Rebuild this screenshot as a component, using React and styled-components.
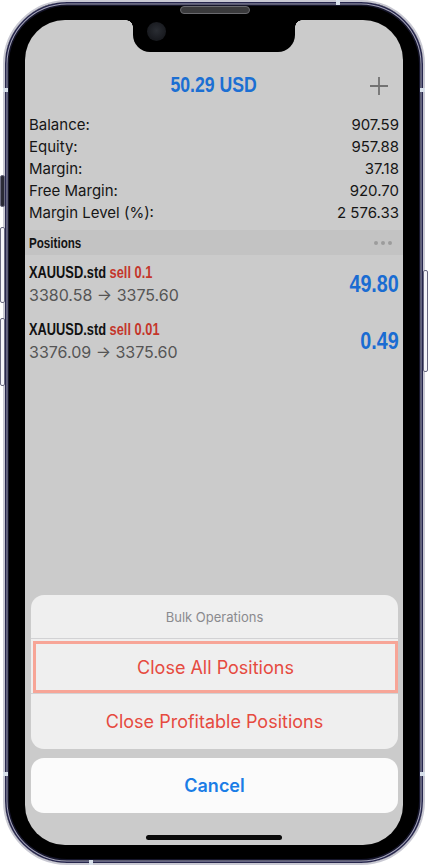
import React from "react";
import styled, { createGlobalStyle } from "styled-components";

const Global = createGlobalStyle`
  html, body { margin: 0; padding: 0; background: #ffffff; }
  body { font-family: Inter, "Noto Sans", sans-serif; -webkit-font-smoothing: antialiased; }
  #root { width: 428px; height: 865px; }
`;

const Phone = styled.div`
  position: relative;
  box-sizing: border-box;
  width: 422px;
  height: 865px;
  margin: 0 auto;
  border-radius: 64px;
  background: #000;
  border: 2px solid #c9c9d3;
  box-shadow: inset 0 0 0 1.5px #26264c, inset 0 0 0 2.5px #a4a4b8, inset 0 0 0 4px #15152b;
  padding: 18px 20px;
  display: flex;
`;

const SideButton = styled.span`
  position: absolute;
  ${(p) => (p.$side === "left" ? "left: -5px;" : "right: -5px;")}
  top: ${(p) => p.$top}px;
  height: ${(p) => p.$h}px;
  width: 3px;
  border: 1px solid #6a6a80;
  border-radius: 2px;
  background: ${(p) => (p.$dark ? "#2a2a36" : "#f4f4f8")};
`;

const Band = styled.span`
  position: absolute;
  background: #d8e0ea;
  ${(p) => p.$css}
`;

const Speaker = styled.span`
  position: absolute;
  left: 175px;
  top: 4px;
  width: 68px;
  height: 6px;
  border-radius: 4px;
  background: #3a3a3c;
  border: 1px solid #6a6a6e;
  z-index: 3;
`;

const Screen = styled.div`
  position: relative;
  flex: 1;
  border-radius: 40px;
  background: #cbcbcb;
  overflow: hidden;
  display: flex;
  flex-direction: column;
`;

const Notch = styled.div`
  position: absolute;
  top: 0;
  left: 108px;
  width: 162px;
  height: 32px;
  background: #000;
  border-radius: 0 0 17px 17px;
  &::before, &::after {
    content: "";
    position: absolute;
    top: 0;
    width: 7px;
    height: 7px;
  }
  &::before {
    left: -7px;
    background: radial-gradient(circle at 0 100%, transparent 6.5px, #000 7px);
  }
  &::after {
    right: -7px;
    background: radial-gradient(circle at 100% 100%, transparent 6.5px, #000 7px);
  }
`;

const Camera = styled.span`
  position: absolute;
  left: 14px;
  top: 2px;
  width: 19px;
  height: 19px;
  border-radius: 50%;
  background: radial-gradient(circle at 50% 45%, #2a2d33 0, #1a1c21 60%, #121317 100%);
`;

/* Narrow bold text (condensed face emulated by horizontal scaling) */
const Narrow = styled.span`
  display: inline-block;
  white-space: nowrap;
  font-family: "Liberation Sans", Arial, sans-serif;
  font-weight: 700;
  font-size: ${(p) => p.$size}px;
  color: ${(p) => p.$color || "#111"};
  transform: scaleX(${(p) => p.$scale || 0.82});
  transform-origin: ${(p) => p.$origin || "left"} center;
`;

const Red = styled.span`
  color: #c4362b;
`;

const Header = styled.div`
  display: grid;
  grid-template-columns: 1fr auto 1fr;
  align-items: center;
  padding: 52px 15px 0;
  height: 26px;
`;

const Title = styled.div`
  grid-column: 2;
  line-height: 26px;
`;

const PlusBtn = styled.div`
  grid-column: 3;
  justify-self: end;
  display: flex;
  width: 18px;
  height: 18px;
`;

const Summary = styled.div`
  padding: 15px 4px 0;
  margin-bottom: 7px;
`;

const Row = styled.div`
  display: flex;
  justify-content: space-between;
  align-items: center;
  height: 22px;
  font-size: 15px;
  color: #161616;
`;

const SectionBar = styled.div`
  display: flex;
  justify-content: space-between;
  align-items: center;
  height: 25px;
  padding: 0 11px 0 4px;
  background: #c3c3c3;
`;

const Dots = styled.div`
  display: flex;
  gap: 3px;
  & > span {
    width: 4px;
    height: 4px;
    border-radius: 50%;
    background: #9c9c9c;
  }
`;

const Position = styled.div`
  display: flex;
  justify-content: space-between;
  align-items: center;
  padding: 6px 4px 5px;
`;

const PosInfo = styled.div`
  display: flex;
  flex-direction: column;
`;

const PosLine = styled.div`
  height: 22px;
  line-height: 22px;
`;

const Prices = styled.div`
  font-size: 16px;
  line-height: 24px;
  color: #555555;
`;

const Sheet = styled.div`
  margin-top: auto;
  padding: 0 5px 0 6px;
  display: flex;
  flex-direction: column;
  gap: 9px;
`;

const Card = styled.div`
  border-radius: 13px;
  background: ${(p) => (p.$white ? "#fbfbfb" : "#efefef")};
  overflow: hidden;
  display: flex;
  flex-direction: column;
`;

const SheetTitle = styled.div`
  height: 43px;
  display: flex;
  align-items: center;
  justify-content: center;
  font-size: 13px;
  color: #8a8a8e;
  border-bottom: 1px solid #d2d2d4;
`;

const Action = styled.div`
  box-sizing: border-box;
  display: flex;
  align-items: center;
  justify-content: center;
  height: ${(p) => p.$h || 55}px;
  font-size: 18px;
  font-weight: ${(p) => (p.$bold ? 600 : 400)};
  color: ${(p) => (p.$blue ? "#1a7de6" : "#e64a40")};
  ${(p) => (p.$divider ? "border-top: 1px solid #d2d2d4;" : "")}
  ${(p) =>
    p.$highlight
      ? "border: 3px solid #f7a597; margin: 2px 0 0 2px;"
      : ""}
`;

const HomeArea = styled.div`
  height: 32px;
  display: flex;
  justify-content: center;
  padding-top: 22px;
  box-sizing: border-box;
`;

const HomeBar = styled.span`
  width: 136px;
  height: 5px;
  border-radius: 3px;
  background: #0a0a0a;
`;

const rows = [
  ["Balance:", "907.59"],
  ["Equity:", "957.88"],
  ["Margin:", "37.18"],
  ["Free Margin:", "920.70"],
  ["Margin Level (%):", "2 576.33"],
];

const positions = [
  { sym: "XAUUSD.std", side: "sell 0.1", from: "3380.58", to: "3375.60", profit: "49.80" },
  { sym: "XAUUSD.std", side: "sell 0.01", from: "3376.09", to: "3375.60", profit: "0.49" },
];

export default function App() {
  return (
    <>
      <Global />
      <Phone>
        <SideButton $side="left" $top={173} $h={30} $dark />
        <SideButton $side="left" $top={225} $h={74} />
        <SideButton $side="left" $top={316} $h={66} />
        <SideButton $side="right" $top={268} $h={100} />
        <Band $css="top: -2px; left: 331px; width: 4px; height: 5px;" />
        <Band $css="top: 86px; left: -2px; width: 5px; height: 4px;" />
        <Band $css="top: 86px; right: -2px; width: 5px; height: 4px;" />
        <Band $css="top: 770px; left: -2px; width: 5px; height: 4px;" />
        <Band $css="top: 770px; right: -2px; width: 5px; height: 4px;" />
        <Band $css="bottom: -2px; left: 84px; width: 4px; height: 5px;" />
        <Speaker />
        <Screen>
          <Notch>
            <Camera />
          </Notch>
          <Header>
            <Title>
              <Narrow $size={21.5} $color="#1b6fd3" $origin="center">50.29 USD</Narrow>
            </Title>
            <PlusBtn>
              <svg width="18" height="18" viewBox="0 0 18 18">
                <path d="M9 0v18M0 9h18" stroke="#727272" strokeWidth="1.8" fill="none" />
              </svg>
            </PlusBtn>
          </Header>
          <Summary>
            {rows.map(([k, v]) => (
              <Row key={k}>
                <span>{k}</span>
                <span>{v}</span>
              </Row>
            ))}
          </Summary>
          <SectionBar>
            <Narrow $size={15.5} $scale={0.75} $color="#141414">Positions</Narrow>
            <Dots>
              <span />
              <span />
              <span />
            </Dots>
          </SectionBar>
          {positions.map((p, i) => (
            <Position key={i}>
              <PosInfo>
                <PosLine>
                  <Narrow $size={17} $scale={0.755}>
                    {p.sym} <Red>{p.side}</Red>
                  </Narrow>
                </PosLine>
                <Prices>
                  {p.from} → {p.to}
                </Prices>
              </PosInfo>
              <Narrow $size={23.5} $scale={0.84} $color="#1a6cd2" $origin="right">{p.profit}</Narrow>
            </Position>
          ))}
          <Sheet>
            <Card>
              <SheetTitle>Bulk Operations</SheetTitle>
              <Action $highlight $h={52}>Close All Positions</Action>
              <Action $divider $h={56}>Close Profitable Positions</Action>
            </Card>
            <Card $white>
              <Action $blue $bold>Cancel</Action>
            </Card>
          </Sheet>
          <HomeArea>
            <HomeBar />
          </HomeArea>
        </Screen>
      </Phone>
    </>
  );
}
